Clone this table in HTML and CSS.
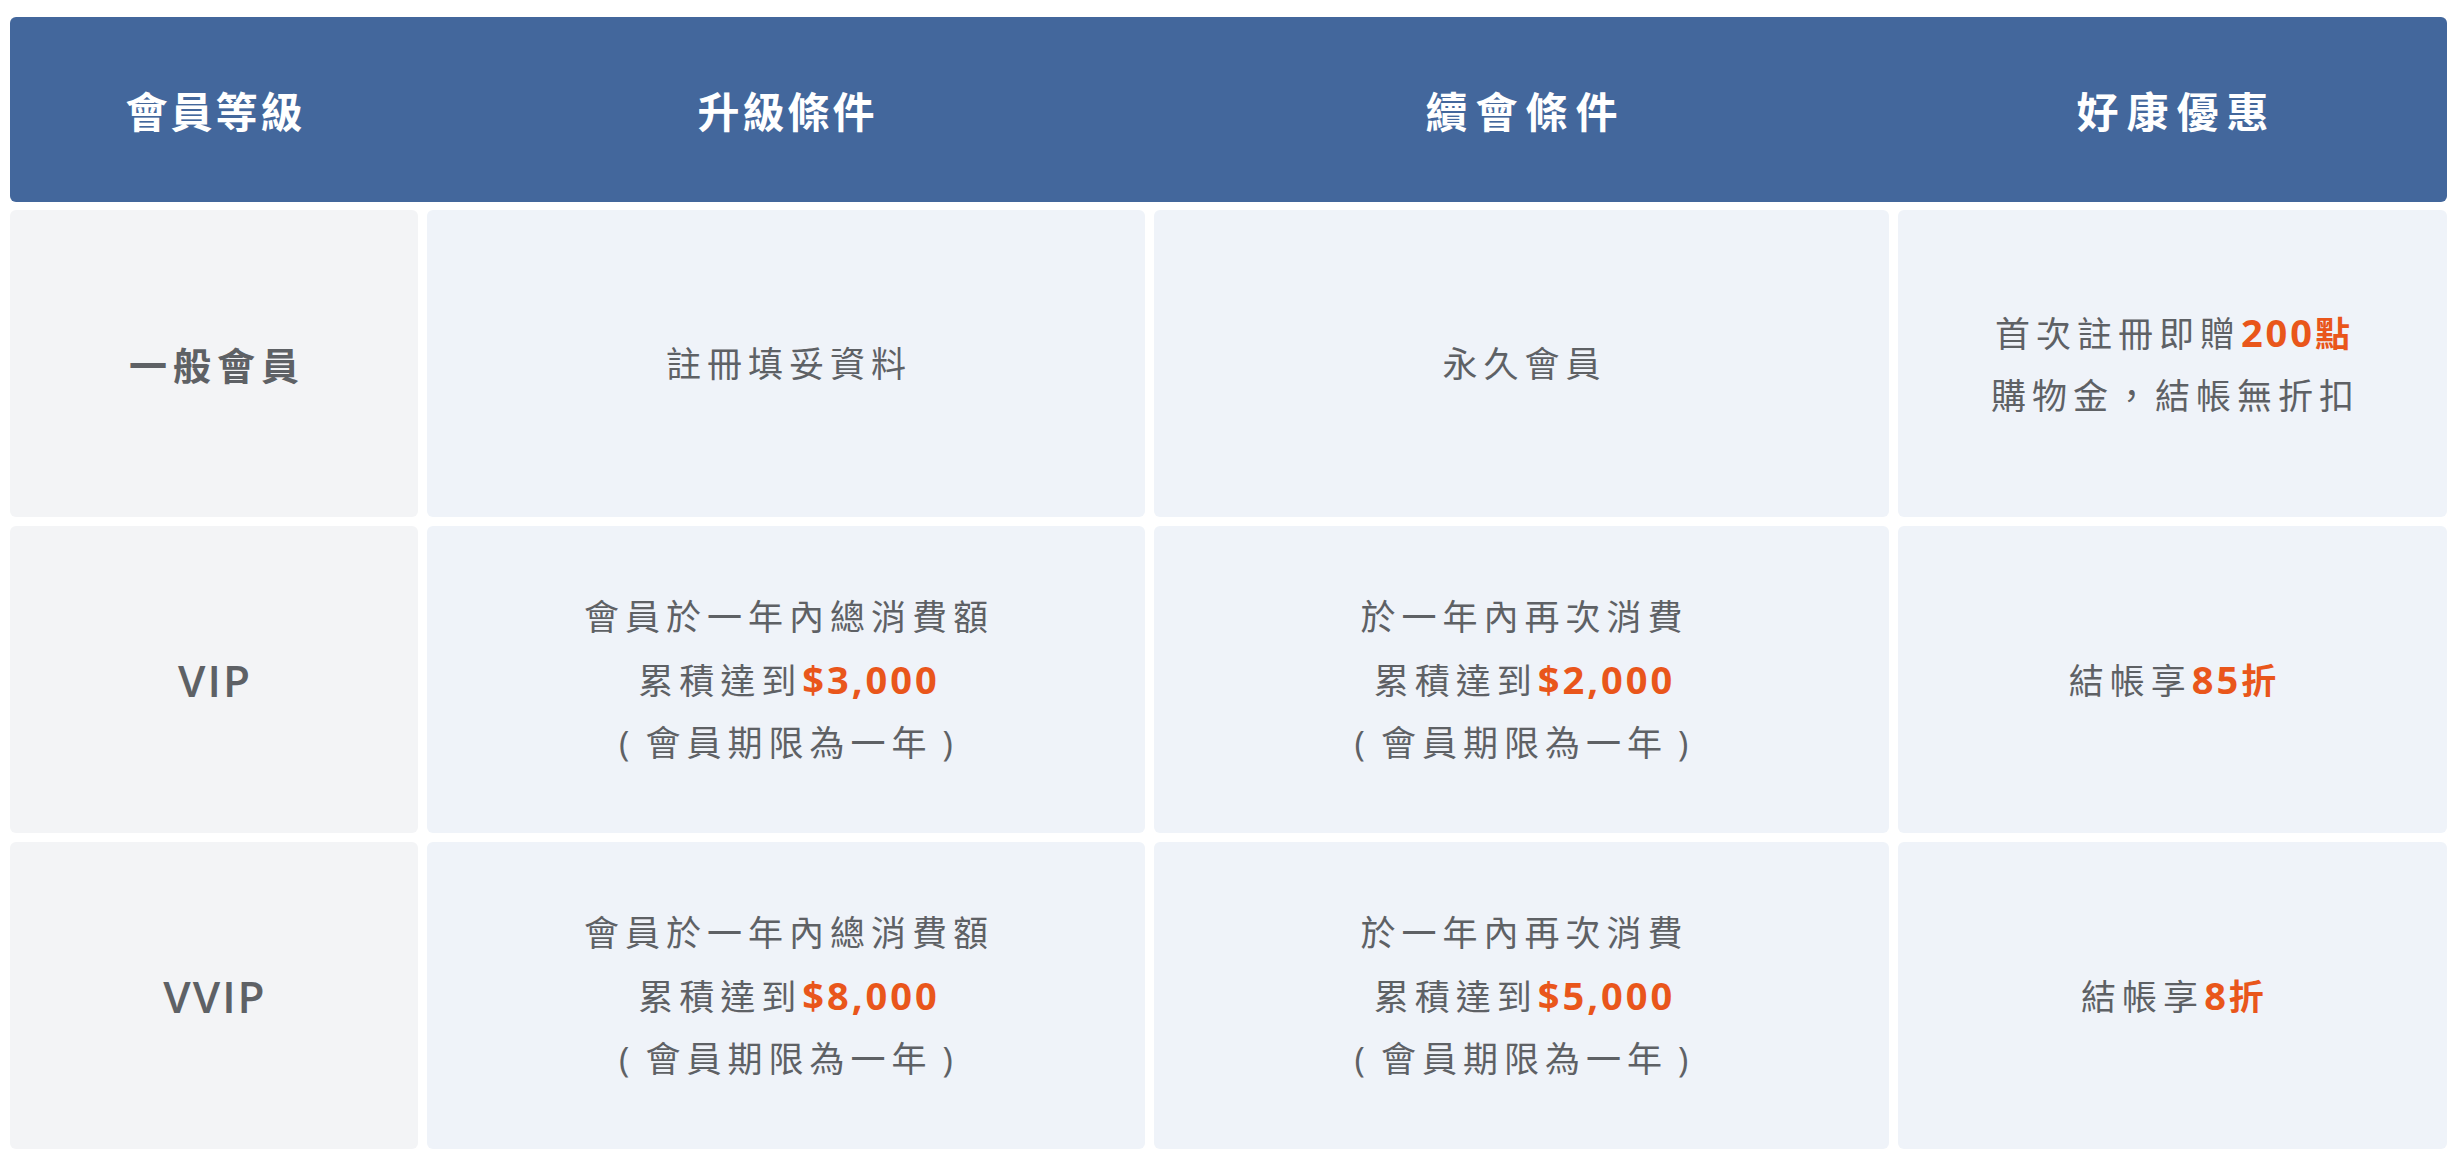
FILE: index.html
```html
<!DOCTYPE html>
<html lang="zh-Hant">
<head>
<meta charset="utf-8">
<title>會員等級</title>
<link rel="stylesheet" href="styles.css">
</head>
<body>
<div class="plan">
  <div class="plan-head">
    <div class="head-cell">會員等級</div>
    <div class="head-cell">升級條件</div>
    <div class="head-cell wide">續會條件</div>
    <div class="head-cell wide">好康優惠</div>
  </div>
  <div class="plan-body">
    <div class="cell level"><p class="txt">一般會員</p></div>
    <div class="cell"><p class="txt">註冊填妥資料</p></div>
    <div class="cell"><p class="txt">永久會員</p></div>
    <div class="cell"><p class="txt">首次註冊即贈<span class="hl"><span class="num">200</span>點</span><br>購物金，結帳無折扣</p></div>

    <div class="cell level latin"><p class="txt">VIP</p></div>
    <div class="cell"><p class="txt">會員於一年內總消費額<br>累積達到<span class="hl num">$3,000</span><br>(<span class="sp"> </span>會員期限為一年<span class="sp"> </span>)</p></div>
    <div class="cell"><p class="txt">於一年內再次消費<br>累積達到<span class="hl num">$2,000</span><br>(<span class="sp"> </span>會員期限為一年<span class="sp"> </span>)</p></div>
    <div class="cell"><p class="txt">結帳享<span class="hl"><span class="num">85</span>折</span></p></div>

    <div class="cell level latin"><p class="txt">VVIP</p></div>
    <div class="cell"><p class="txt">會員於一年內總消費額<br>累積達到<span class="hl num">$8,000</span><br>(<span class="sp"> </span>會員期限為一年<span class="sp"> </span>)</p></div>
    <div class="cell"><p class="txt">於一年內再次消費<br>累積達到<span class="hl num">$5,000</span><br>(<span class="sp"> </span>會員期限為一年<span class="sp"> </span>)</p></div>
    <div class="cell"><p class="txt">結帳享<span class="hl"><span class="num">8</span>折</span></p></div>
  </div>
</div>
</body>
</html>
```
FILE: styles.css
```css
html, body {
  background: #ffffff;
}
body {
  margin: 17px 9px 0 10px;
  font-family: "Open Sans", "Noto Sans CJK TC", sans-serif;
  color: #5e6165;
}
.plan {
  width: 2437px;
  display: flex;
  flex-direction: column;
  gap: 8px;
}
.plan-head,
.plan-body {
  display: grid;
  grid-template-columns: 408px 718px 735px 549px;
  column-gap: 9px;
}
.plan-head {
  background: #43679c;
  border-radius: 6px;
  height: 185px;
}
.head-cell {
  display: flex;
  align-items: center;
  justify-content: center;
  color: #ffffff;
  font-family: "Noto Sans CJK TC", sans-serif;
  font-weight: 700;
  font-size: 42px;
  letter-spacing: 3px;
  padding-left: 3px;
}
.head-cell.wide {
  letter-spacing: 8px;
  padding-left: 8px;
}
.plan-body {
  grid-auto-rows: 307px;
  row-gap: 9px;
}
.cell {
  background: #eff3f9;
  border-radius: 6px;
  display: flex;
  align-items: center;
  justify-content: center;
  text-align: center;
  font-size: 35px;
  line-height: 62px;
  letter-spacing: 6px;
  padding-left: 6px;
}
.txt {
  margin: 0;
}
.sp {
  letter-spacing: 1px;
}
.level {
  background: #f3f4f6;
  font-family: "Noto Sans CJK TC", sans-serif;
  font-weight: 700;
  font-size: 38px;
  letter-spacing: 6px;
}
.level.latin {
  font-family: "Open Sans", sans-serif;
  font-weight: 600;
  font-size: 44px;
  letter-spacing: 2px;
  padding-left: 2px;
}
.hl {
  color: #e9561b;
  font-weight: 700;
}
.num {
  font-size: 38px;
  letter-spacing: 3px;
}
```
